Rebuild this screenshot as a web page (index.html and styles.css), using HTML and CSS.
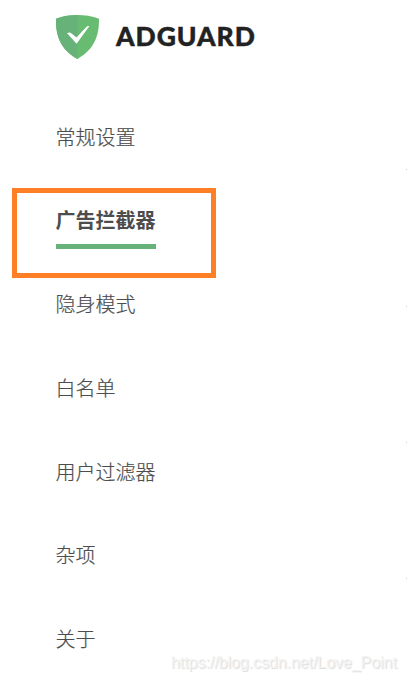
FILE: index.html
```html
<!DOCTYPE html>
<html lang="zh-CN">
<head>
<meta charset="utf-8">
<title>AdGuard</title>
<link rel="stylesheet" href="styles.css">
</head>
<body>
<div class="page">
  <header class="brand">
    <svg class="shield" viewBox="0 0 44 44" width="44" height="44" preserveAspectRatio="none">
      <path fill="#68bc71" d="M22 0C15.200 0 7 .8 0 3.800 0 12.900-.1 32 22 44 44 32 44 12.900 44 3.800 37 .8 28.800 0 22 0z"/>
      <path fill="#67b279" d="M22 0C15.200 0 7 .8 0 3.800 0 12.900-.1 32 22 44z"/>
      <path fill="#fff" d="M21 28.700 11.400 18.200q2.400-1.400 4.600.2l5 4.200 9.700-10.300q1.700-1.500 3.400-1.100z"/>
    </svg>
    <span class="wordmark">ADGUARD</span>
  </header>
  <nav class="menu">
    <a class="item">常规设置</a>
    <a class="item active">广告拦截器</a>
    <a class="item">隐身模式</a>
    <a class="item">白名单</a>
    <a class="item">用户过滤器</a>
    <a class="item">杂项</a>
    <a class="item">关于</a>
  </nav>
  <div class="highlight"></div>
  <i class="dot dot1"></i><i class="dot dot2"></i><i class="dot dot3"></i><i class="dot dot4"></i>
  <div class="watermark">https://blog.csdn.net/Love_Point</div>
</div>
</body>
</html>
```
FILE: styles.css
```css
* { box-sizing: border-box; }
body { margin: 0; background: #fff; }
.page {
  position: relative;
  width: 407px;
  height: 681px;
  overflow: hidden;
  padding: 15px 0 0 56px;
  font-family: "Noto Sans CJK SC", sans-serif;
}
.brand { display: flex; align-items: center; height: 44px; }
.shield { display: block; width: 43px; height: 44px; }
.wordmark {
  margin-left: 17px;
  padding-bottom: 2px;
  font: 900 26.500px/42px Lato, sans-serif;
  letter-spacing: 0.950px;
  color: #222;
  -webkit-text-stroke: 0.400px #222;
}
.menu {
  display: flex;
  flex-direction: column;
  align-items: flex-start;
  gap: 47.700px;
  padding-top: 60px;
}
.item {
  height: 36px;
  font-size: 20px;
  font-weight: 300;
  line-height: 36px;
  color: #4d4d4d;
  white-space: nowrap;
  text-indent: -0.600px;
  -webkit-text-stroke: 0.200px #4d4d4d;
}
.active { position: relative; font-weight: 700; line-height: 34px; -webkit-text-stroke: 0; }
.active::after {
  content: "";
  position: absolute;
  left: 0;
  width: 100px;
  top: 41px;
  height: 5px;
  background: #67b279;
}
.highlight {
  position: absolute;
  left: 12px;
  top: 188px;
  width: 204px;
  height: 90px;
  border: 5px solid #ff7f27;
}
.dot { position: absolute; left: 406px; width: 1px; height: 1px; background: #ccc; }
.dot1 { top: 169px; }
.dot2 { top: 306px; }
.dot3 { top: 442px; }
.dot4 { top: 578px; }
.watermark {
  position: absolute;
  left: 171px;
  top: 653px;
  font: 16px/20px "Liberation Sans", sans-serif;
  letter-spacing: -0.060px;
  color: #f4f4f4;
  text-shadow: 1px 1px 1px #dadada;
  white-space: nowrap;
}
```
